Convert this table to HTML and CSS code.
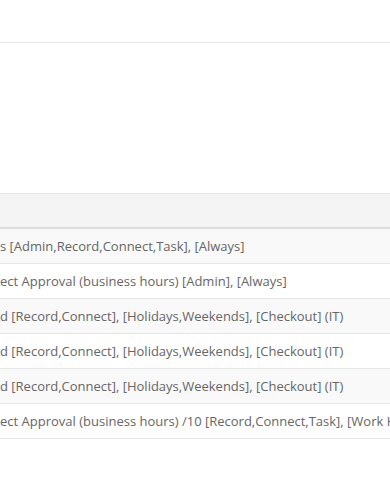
FILE: index.html
```html
<!DOCTYPE html>
<html>
<head>
<meta charset="utf-8">
<link rel="stylesheet" href="styles.css">
</head>
<body>
<div class="page">
  <div class="topbar"></div>
  <div class="spacer"></div>
  <div class="table">
    <div class="thead"></div>
    <div class="row odd"><span class="cell">s [Admin,Record,Connect,Task], [Always]</span></div>
    <div class="row"><span class="cell">ect Approval (business hours) [Admin], [Always]</span></div>
    <div class="row odd"><span class="cell">d [Record,Connect], [Holidays,Weekends], [Checkout] (IT)</span></div>
    <div class="row"><span class="cell">d [Record,Connect], [Holidays,Weekends], [Checkout] (IT)</span></div>
    <div class="row odd"><span class="cell">d [Record,Connect], [Holidays,Weekends], [Checkout] (IT)</span></div>
    <div class="row"><span class="cell">ect Approval (business hours) /10 [Record,Connect,Task], [Work Hours]</span></div>
  </div>
</div>
</body>
</html>
```
FILE: styles.css
```css
html, body {
  margin: 0;
  padding: 0;
  background: #ffffff;
}
.page {
  width: 390px;
  height: 493px;
  overflow: hidden;
  font-family: "Open Sans", "Liberation Sans", sans-serif;
  font-size: 13px;
  color: #666666;
}
.topbar {
  height: 42px;
  border-bottom: 1px solid #e6e6e6;
}
.spacer {
  height: 150px;
}
.table {
  border-top: 1px solid #e8e8e8;
}
.thead {
  height: 33px;
  background: #f4f4f4;
  border-bottom: 2px solid #dddddd;
}
.row {
  height: 34px;
  border-bottom: 1px solid #e6e6e6;
  display: flex;
  align-items: center;
  white-space: nowrap;
  overflow: hidden;
}
.row.odd {
  background: #f9f9f9;
}
.cell {
  padding-left: 0;
}
```
